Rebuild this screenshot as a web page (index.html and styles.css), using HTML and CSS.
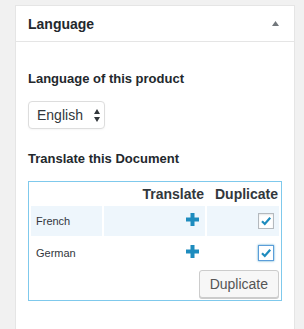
FILE: index.html
```html
<!DOCTYPE html>
<html>
<head>
<meta charset="utf-8">
<link rel="stylesheet" href="styles.css">
</head>
<body>
<div class="postbox">
  <div class="postbox-header">
    <h2 class="postbox-title">Language</h2>
    <svg class="toggle" width="7" height="5" viewBox="0 0 7 5"><polygon points="0,5 3.5,0 7,5" fill="#72777c"/></svg>
  </div>
  <div class="inside">
    <p class="label first">Language of this product</p>
    <div class="select-wrap">
      <select class="lang-select"><option>English</option></select>
      <svg class="select-arrows" width="6" height="13" viewBox="0 0 6 13"><polygon points="0,5 3,0 6,5" fill="#32373c"/><polygon points="0,8 3,13 6,8" fill="#32373c"/></svg>
    </div>
    <p class="label second">Translate this Document</p>
    <div class="trans-box">
      <table class="trans-table">
        <colgroup><col class="c1"><col class="c2"><col class="c3"></colgroup>
        <thead>
          <tr><th></th><th>Translate</th><th>Duplicate</th></tr>
        </thead>
        <tbody>
          <tr class="alt">
            <td class="lang">French</td>
            <td class="icon"><svg class="plus" width="13" height="13" viewBox="0 0 13 13"><path d="M4.5 0h4v4.5h4.5v4h-4.5v4.5h-4v-4.5h-4.5v-4h4.5z" fill="#1e8cbe"/></svg></td>
            <td class="check"><span class="cb"><svg width="14" height="14" viewBox="0 0 14 14"><path d="M3 7.2l2.8 2.8 5.4-6.2" fill="none" stroke="#1e8cbe" stroke-width="2.2"/></svg></span></td>
          </tr>
          <tr>
            <td class="lang">German</td>
            <td class="icon"><svg class="plus" width="13" height="13" viewBox="0 0 13 13"><path d="M4.5 0h4v4.5h4.5v4h-4.5v4.5h-4v-4.5h-4.5v-4h4.5z" fill="#1e8cbe"/></svg></td>
            <td class="check"><span class="cb focus"><svg width="14" height="14" viewBox="0 0 14 14"><path d="M3 7.2l2.8 2.8 5.4-6.2" fill="none" stroke="#1e8cbe" stroke-width="2.2"/></svg></span></td>
          </tr>
          <tr class="btn-row">
            <td colspan="3" class="btn-cell"><button class="button">Duplicate</button></td>
          </tr>
        </tbody>
      </table>
    </div>
  </div>
</div>
</body>
</html>
```
FILE: styles.css
```css
html, body {
  margin: 0;
  padding: 0;
  background: #f1f1f1;
  overflow: hidden;
  font-family: "Liberation Sans", Arial, sans-serif;
  color: #32373c;
}
.postbox {
  box-sizing: border-box;
  margin: 5px 0 0 15px;
  width: 280px;
  height: 340px;
  background: #fff;
  border: 1px solid #e5e5e5;
}
.postbox-header {
  box-sizing: border-box;
  height: 36px;
  border-bottom: 1px solid #e5e5e5;
  display: flex;
  align-items: center;
  justify-content: space-between;
  padding: 0 15px 0 12px;
}
.postbox-title {
  margin: 0;
  font-size: 14px;
  font-weight: bold;
  color: #23282d;
  line-height: 18px;
}
.toggle { display: block; }
.inside {
  padding: 0 12px;
}
.label {
  margin: 0;
  font-size: 13px;
  font-weight: bold;
  line-height: 18px;
  color: #23282d;
}
.label.first { margin-top: 28px; }
.label.second { margin-top: 21px; }
.select-wrap {
  position: relative;
  margin-top: 13px;
  width: 77px;
  height: 28px;
}
.lang-select {
  -webkit-appearance: none;
  appearance: none;
  box-sizing: border-box;
  width: 77px;
  height: 28px;
  margin: 0;
  padding: 0 0 0 8px;
  border: 1px solid #ddd;
  border-radius: 4px;
  background: #fff;
  box-shadow: 0 1px 2px rgba(0,0,0,0.04);
  font-family: "Liberation Sans", Arial, sans-serif;
  font-size: 14px;
  color: #32373c;
  outline: none;
}
.select-arrows {
  position: absolute;
  left: 66px;
  top: 8px;
  pointer-events: none;
}
.trans-box {
  box-sizing: border-box;
  margin-top: 13px;
  width: 254px;
  border: 1px solid #7fc9ec;
}
.trans-table {
  width: 252px;
  table-layout: fixed;
  border-collapse: separate;
  border-spacing: 2px;
}
.c1 { width: 71px; }
.c2 { width: 101px; }
.c3 { width: 72px; }
.trans-table th {
  height: 20px;
  padding: 0 1px 0 0;
  text-align: right;
  font-size: 14px;
  font-weight: bold;
  color: #32373c;
  vertical-align: middle;
  line-height: 16px;
}
.trans-table td {
  height: 30px;
  padding: 0;
  vertical-align: middle;
}
.alt td { background: #eef6fc; }
.lang {
  padding-left: 5px !important;
  font-size: 11px;
  color: #32373c;
}
.icon { text-align: right; }
.plus {
  display: block;
  margin: 0 6px 4px auto;
}
.check { text-align: right; }
.cb {
  box-sizing: border-box;
  display: block;
  width: 16px;
  height: 16px;
  margin: 0 5px 0 auto;
  border: 1px solid #b4b9be;
  background: #fff;
  box-shadow: inset 0 1px 2px rgba(0,0,0,0.1);
}
.cb svg { display: block; margin: 0 0 0 0; }
.cb.focus {
  border-color: #5b9dd9;
  box-shadow: 0 0 2px rgba(30,140,190,0.8);
}
.btn-row td { height: 28px; }
.btn-cell { text-align: right; padding-right: 0 !important; }
.button {
  box-sizing: border-box;
  height: 28px;
  padding: 0 10px;
  margin: 0;
  border: 1px solid #ccc;
  border-radius: 3px;
  background: #f7f7f7;
  box-shadow: 0 1px 0 #ccc;
  color: #555;
  font-family: "Liberation Sans", Arial, sans-serif;
  font-size: 14px;
  line-height: 26px;
  vertical-align: top;
}
```
